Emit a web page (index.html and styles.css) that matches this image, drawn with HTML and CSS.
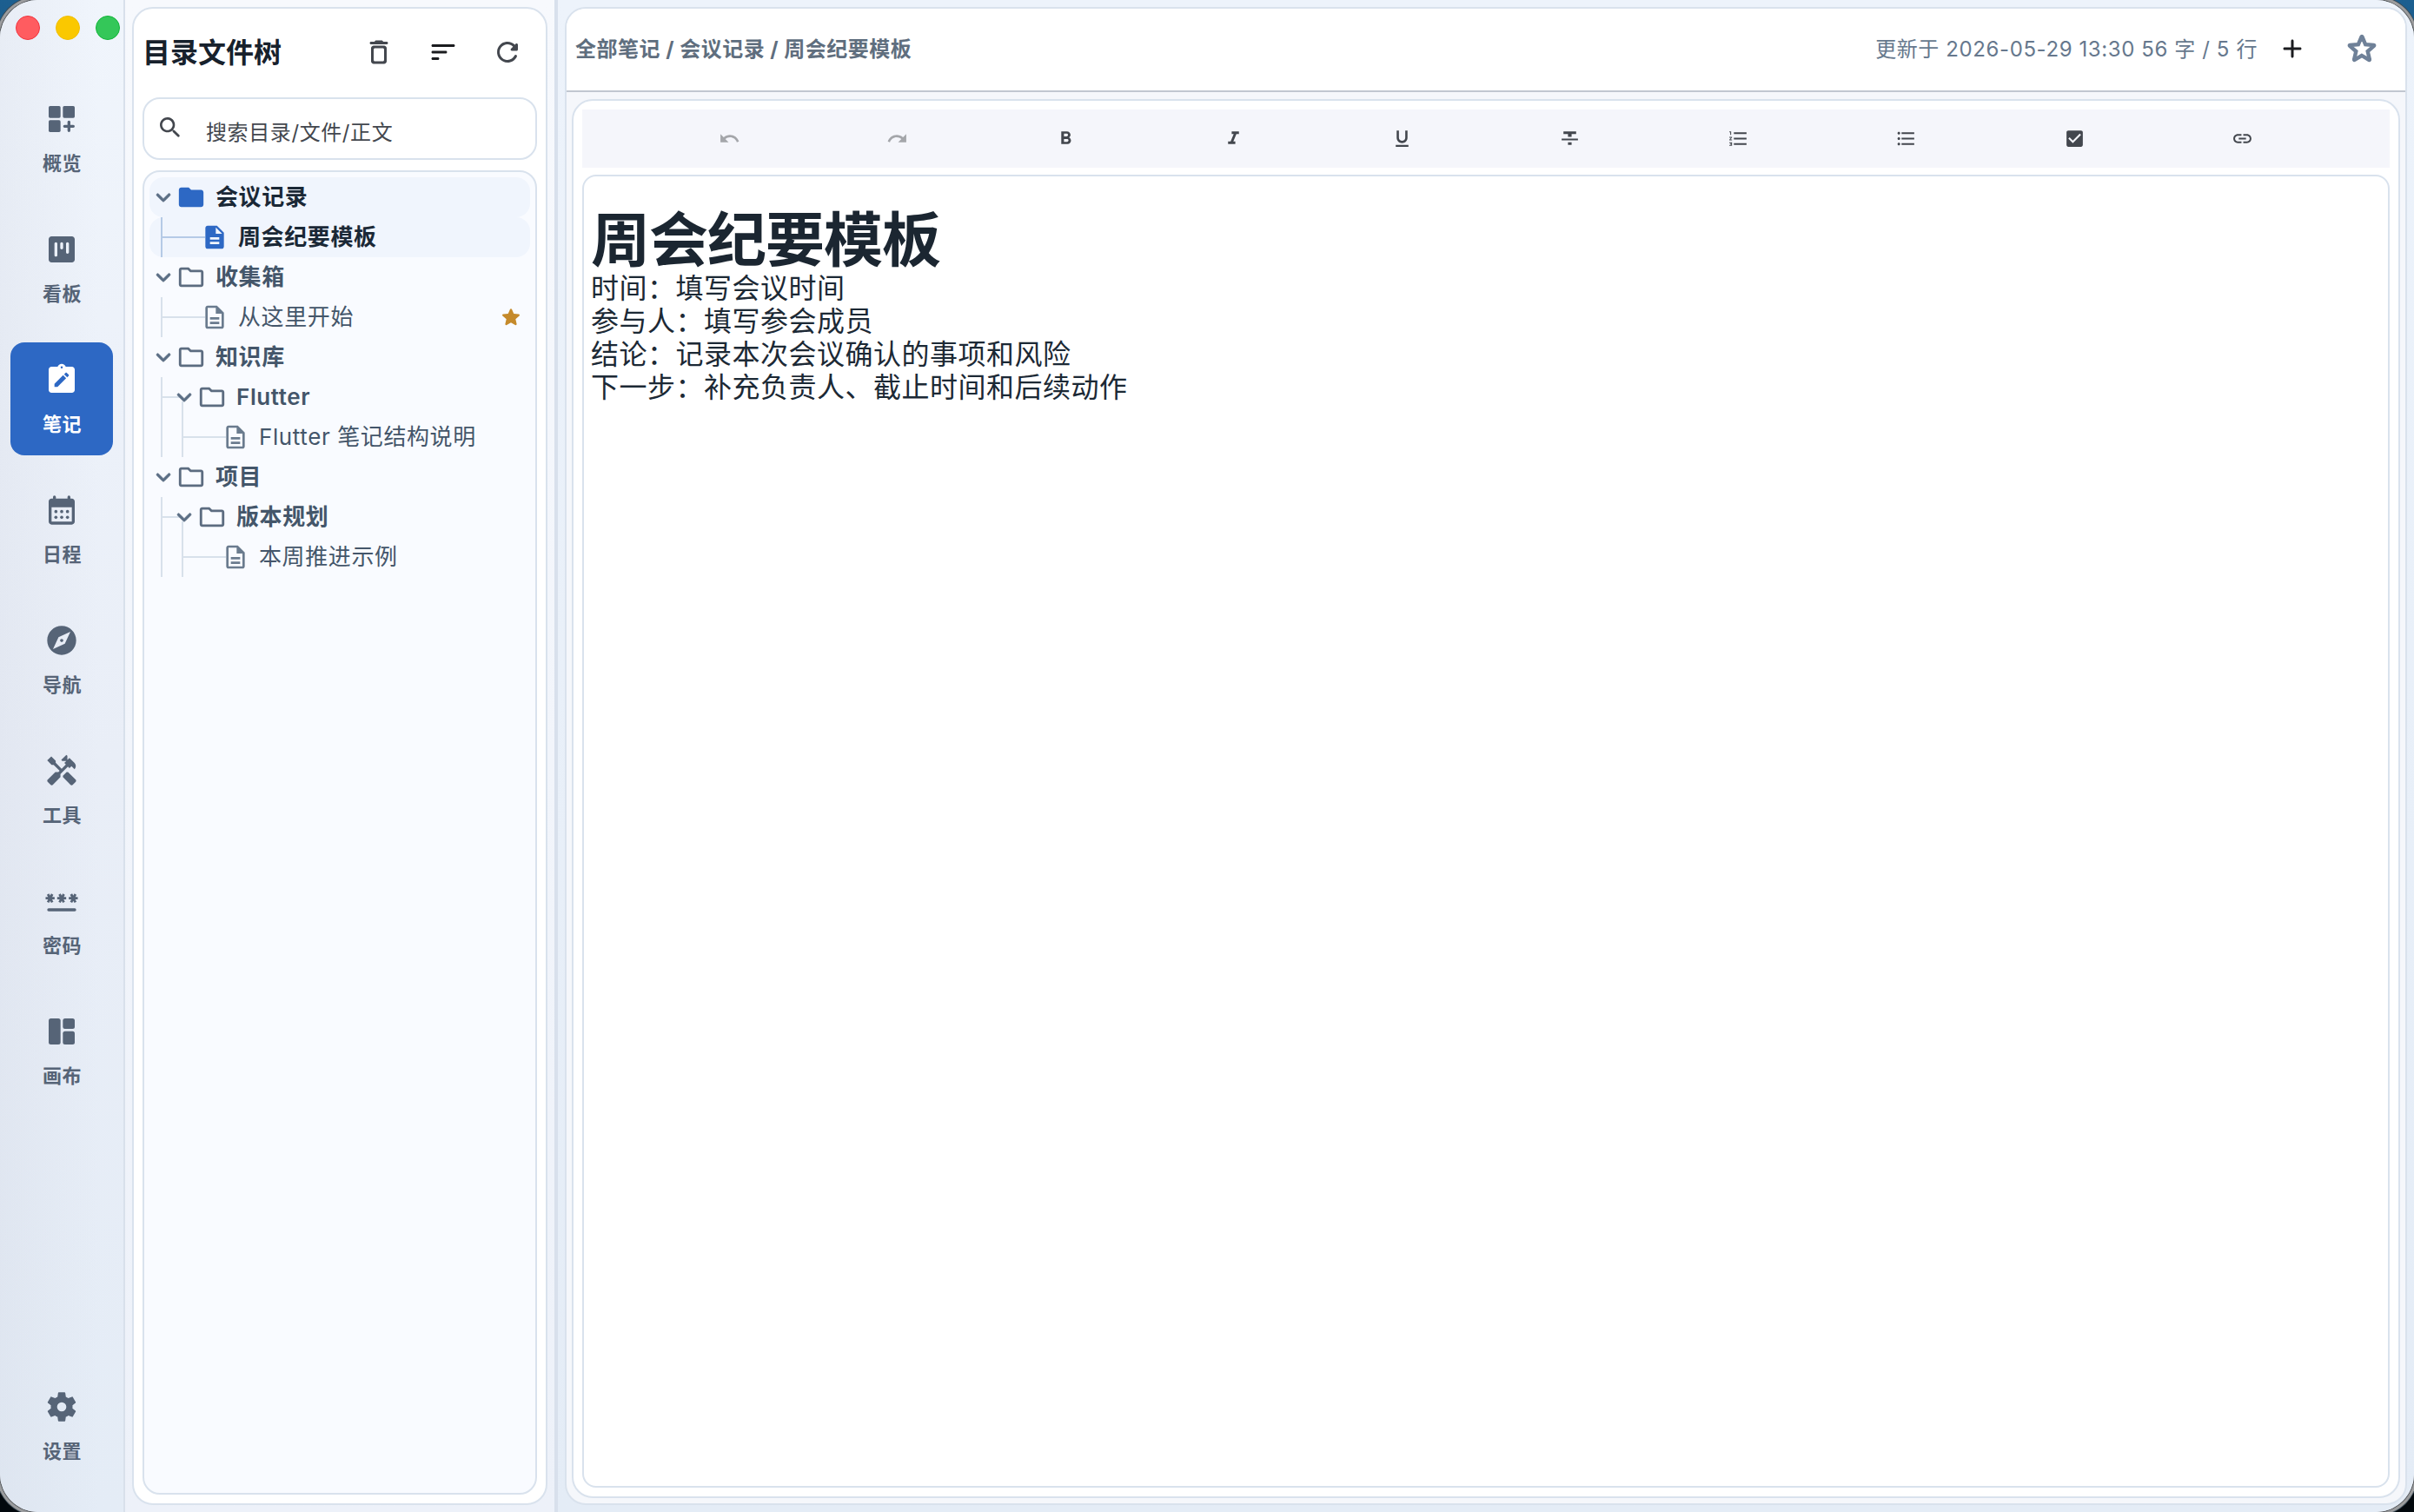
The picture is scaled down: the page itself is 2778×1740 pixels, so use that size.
FILE: index.html
```html
<!DOCTYPE html>
<html lang="zh-CN">

<head>
    <meta charset="UTF-8" />
    <meta name="viewport" content="width=device-width, initial-scale=1.0" />
    <title>周会纪要模板</title>
    <link rel="stylesheet" href="styles.css">
</head>

<body>
    <!-- Shared icons -->
    <svg class="sprite">
        <symbol id="i-chevron" viewBox="0 0 24 24"><path d="M8.12 9.29 12 13.17l3.88-3.88a1 1 0 1 1 1.41 1.41l-4.59 4.59a1 1 0 0 1-1.41 0L6.7 10.7a1 1 0 0 1 0-1.41 1 1 0 0 1 1.42 0z" /></symbol>
        <symbol id="i-folder" viewBox="0 0 24 24"><path d="m9.17 6 2 2H20v10H4V6h5.17M10 4H4c-1.1 0-1.99.9-1.99 2L2 18c0 1.1.9 2 2 2h16c1.1 0 2-.9 2-2V8c0-1.1-.9-2-2-2h-8l-2-2z" /></symbol>
        <symbol id="i-folder-fill" viewBox="0 0 24 24"><path d="M10 4H4c-1.1 0-1.99.9-1.99 2L2 18c0 1.1.9 2 2 2h16c1.1 0 2-.9 2-2V8c0-1.1-.9-2-2-2h-8l-2-2z" /></symbol>
        <symbol id="i-doc" viewBox="0 0 24 24"><path d="M8 16h8v2H8zm0-4h8v2H8zm6-10H6c-1.1 0-2 .9-2 2v16c0 1.1.89 2 1.99 2H18c1.1 0 2-.9 2-2V8l-6-6zm4 18H6V4h7v5h5v11z" /></symbol>
        <symbol id="i-doc-fill" viewBox="0 0 24 24"><path d="M14 2H6c-1.1 0-1.99.9-1.99 2L4 20c0 1.1.89 2 1.99 2H18c1.1 0 2-.9 2-2V8l-6-6zm2 16H8v-2h8v2zm0-4H8v-2h8v2zm-3-5V3.5L18.5 9H13z" /></symbol>
    </svg>

    <div class="window">
        <nav class="sidebar">
            <div class="lights"><i class="red"></i><i class="yellow"></i><i class="green"></i></div>
            <div class="nav">
                <a class="nav-item">
                    <svg viewBox="0 0 24 24"><rect x="3" y="3" width="8.2" height="8.2" rx="1" /><rect x="12.8" y="3" width="8.2" height="8.2" rx="1" /><rect x="3" y="12.8" width="8.2" height="8.2" rx="1" /><path d="M17 13a1 1 0 0 1 1 1v2h2a1 1 0 0 1 0 2h-2v2a1 1 0 0 1-2 0v-2h-2a1 1 0 0 1 0-2h2v-2a1 1 0 0 1 1-1z" /></svg>
                    <span>概览</span>
                </a>
                <a class="nav-item">
                    <svg viewBox="0 0 24 24"><path d="M19 3H5c-1.100 0-2 .9-2 2v14c0 1.100.9 2 2 2h14c1.100 0 2-.9 2-2V5c0-1.100-.9-2-2-2zM8 17c-.55 0-1-.45-1-1V8c0-.55.45-1 1-1s1 .45 1 1v8c0 .55-.45 1-1 1zm4-5c-.55 0-1-.45-1-1V8c0-.55.45-1 1-1s1 .45 1 1v3c0 .55-.45 1-1 1zm4 3c-.55 0-1-.45-1-1V8c0-.55.45-1 1-1s1 .45 1 1v6c0 .55-.45 1-1 1z" /></svg>
                    <span>看板</span>
                </a>
                <a class="nav-item active">
                    <svg viewBox="0 0 24 24"><path fill-rule="evenodd" d="M19 3h-4.180C14.400 1.840 13.300 1 12 1s-2.400.84-2.820 2H5c-1.100 0-2 .9-2 2v14c0 1.100.9 2 2 2h14c1.100 0 2-.9 2-2V5c0-1.100-.9-2-2-2zm-7-.25a.75.75 0 1 1 0 1.500.75.75 0 0 1 0-1.500zM9.100 17H7v-2.140l5.960-5.960 2.120 2.120L9.100 17zm7.750-7.730-1.060 1.060-2.120-2.120 1.060-1.060c.2-.2.51-.2.71 0l1.410 1.410c.2.2.2.51 0 .71z" /></svg>
                    <span>笔记</span>
                </a>
                <a class="nav-item">
                    <svg viewBox="0 0 24 24"><path fill-rule="evenodd" d="M19 4h-1V3a1 1 0 0 0-2 0v1H8V3a1 1 0 0 0-2 0v1H5c-1.110 0-2 .9-2 2v14c0 1.100.89 2 2 2h14c1.100 0 2-.9 2-2V6c0-1.100-.9-2-2-2zm0 16H5V10h14v10z" /><circle cx="8" cy="13" r="1.100" /><circle cx="12" cy="13" r="1.100" /><circle cx="16" cy="13" r="1.100" /><circle cx="8" cy="17" r="1.100" /><circle cx="12" cy="17" r="1.100" /><circle cx="16" cy="17" r="1.100" /></svg>
                    <span>日程</span>
                </a>
                <a class="nav-item">
                    <svg viewBox="0 0 24 24"><path d="M12 10.900c-.61 0-1.100.49-1.100 1.100s.49 1.100 1.100 1.100c.61 0 1.100-.49 1.100-1.100s-.49-1.100-1.100-1.100zM12 2C6.480 2 2 6.480 2 12s4.480 10 10 10 10-4.480 10-10S17.520 2 12 2zm2.190 12.190L6 18l3.810-8.190L18 6l-3.810 8.190z" /></svg>
                    <span>导航</span>
                </a>
                <a class="nav-item">
                    <svg viewBox="0 0 24 24"><path d="m21.670 18.170-5.300-5.300h-.99l-2.540 2.540v.99l5.300 5.300c.39.39 1.020.39 1.410 0l2.120-2.120c.39-.38.39-1.020 0-1.410z" /><path d="m17.340 10.190 1.410-1.410 2.120 2.120c1.170-1.170 1.170-3.070 0-4.240l-3.540-3.540-1.410 1.410V1.710L15.220 1l-3.540 3.540.71.71h2.830l-1.410 1.410 1.060 1.060-2.890 2.890-4.130-4.130V5.060L4.830 2.040 2 4.870 5.030 7.900h1.410l4.130 4.130-.85.85H7.600l-5.300 5.300c-.39.39-.39 1.020 0 1.410l2.120 2.120c.39.39 1.020.39 1.410 0l5.300-5.300v-2.120l5.150-5.150 1.060 1.050z" /></svg>
                    <span>工具</span>
                </a>
                <a class="nav-item">
                    <svg viewBox="0 0 24 24"><path d="M3 17h18a1 1 0 0 1 0 2H3a1 1 0 0 1 0-2z" /><g fill="none" stroke="currentColor" stroke-width="1.700"><path id="ast" d="M.9 10h6.200M2.500 7.200l3 5.600M5.500 7.200l-3 5.600" /><use href="#ast" x="8" /><use href="#ast" x="16" /></g></svg>
                    <span>密码</span>
                </a>
                <a class="nav-item">
                    <svg viewBox="0 0 24 24"><rect x="3" y="3" width="8.200" height="18" rx="1.500" /><rect x="12.800" y="3" width="8.200" height="7.200" rx="1.500" /><rect x="12.800" y="11.800" width="8.200" height="9.200" rx="1.500" /></svg>
                    <span>画布</span>
                </a>
                <a class="nav-item settings">
                    <svg viewBox="0 0 24 24"><path d="M19.430 12.980c.04-.32.07-.64.07-.98s-.03-.66-.07-.98l2.110-1.650c.19-.15.24-.42.12-.64l-2-3.460c-.12-.22-.39-.3-.61-.22l-2.490 1c-.52-.4-1.080-.73-1.690-.98l-.38-2.650C14.460 2.180 14.250 2 14 2h-4c-.25 0-.46.18-.49.42l-.38 2.650c-.61.25-1.170.59-1.690.98l-2.490-1c-.23-.09-.49 0-.61.22l-2 3.460c-.13.22-.07.49.12.64l2.110 1.650c-.04.32-.07.65-.07.98s.03.66.07.98l-2.110 1.650c-.19.15-.24.42-.12.64l2 3.460c.12.22.39.3.61.22l2.490-1c.52.4 1.080.73 1.690.98l.38 2.650c.03.24.24.42.49.42h4c.25 0 .46-.18.49-.42l.38-2.650c.61-.25 1.170-.59 1.690-.98l2.490 1c.23.09.49 0 .61-.22l2-3.460c.12-.22.07-.49-.12-.64l-2.110-1.650zM12 15.200a3.200 3.200 0 1 1 0-6.400 3.200 3.200 0 0 1 0 6.400z" /></svg>
                    <span>设置</span>
                </a>
            </div>
        </nav>

        <aside class="tree-pane">
            <div class="tree-card">
                <header class="tree-head">
                    <h2>目录文件树</h2>
                    <svg viewBox="0 0 24 24"><path d="M6 19c0 1.100.9 2 2 2h8c1.100 0 2-.9 2-2V9c0-1.100-.9-2-2-2H8c-1.100 0-2 .9-2 2v10zM9 9h6c.55 0 1 .45 1 1v8c0 .55-.45 1-1 1H9c-.55 0-1-.45-1-1v-8c0-.55.45-1 1-1zm6.500-5-.71-.71c-.18-.18-.44-.29-.7-.29H9.910c-.26 0-.52.11-.7.29L8.500 4H6c-.55 0-1 .45-1 1s.45 1 1 1h12c.55 0 1-.45 1-1s-.45-1-1-1h-2.500z" /></svg>
                    <svg class="dark" viewBox="0 0 24 24"><path d="M4 18h4c.55 0 1-.45 1-1s-.45-1-1-1H4c-.55 0-1 .45-1 1s.45 1 1 1zM3 7c0 .55.45 1 1 1h16c.55 0 1-.45 1-1s-.45-1-1-1H4c-.55 0-1 .45-1 1zm1 6h10c.55 0 1-.45 1-1s-.45-1-1-1H4c-.55 0-1 .45-1 1s.45 1 1 1z" /></svg>
                    <svg viewBox="0 0 24 24"><path d="M17.650 6.350c-1.630-1.630-3.940-2.570-6.480-2.310-3.670.37-6.690 3.350-7.100 7.020C3.520 15.910 7.270 20 12 20c3.190 0 5.930-1.870 7.210-4.560.32-.67-.16-1.440-.9-1.440-.37 0-.72.2-.88.53-1.130 2.430-3.840 3.970-6.800 3.310-2.220-.49-4.010-2.300-4.480-4.520C5.310 9.440 8.260 6 12 6c1.660 0 3.140.69 4.220 1.780l-1.510 1.510c-.63.63-.19 1.710.7 1.710H19c.55 0 1-.45 1-1V6.410c0-.89-1.080-1.340-1.710-.71l-.64.65z" /></svg>
                </header>
                <div class="search">
                    <svg viewBox="0 0 24 24"><path d="M15.500 14h-.79l-.28-.27c1.200-1.400 1.820-3.310 1.480-5.340-.47-2.780-2.790-5-5.590-5.340-4.230-.52-7.780 3.040-7.270 7.270.34 2.800 2.560 5.120 5.340 5.590 2.030.34 3.940-.28 5.340-1.480l.27.28v.79l4.250 4.250c.41.41 1.080.41 1.490 0 .41-.41.41-1.080 0-1.490L15.500 14zm-6 0C7.010 14 5 11.990 5 9.500S7.010 5 9.500 5 14 7.010 14 9.500 11.990 14 9.500 14z" /></svg>
                    <span>搜索目录/文件/正文</span>
                </div>
                <div class="tree">
                    <div class="row folder on"><svg class="chev"><use href="#i-chevron" /></svg><svg class="fold"><use href="#i-folder-fill" /></svg><span>会议记录</span></div>
                    <div class="row file on"><i class="branch"></i><svg class="doc"><use href="#i-doc-fill" /></svg><span>周会纪要模板</span></div>
                    <div class="row folder"><svg class="chev"><use href="#i-chevron" /></svg><svg class="fold"><use href="#i-folder" /></svg><span>收集箱</span></div>
                    <div class="row file"><i class="branch"></i><svg class="doc"><use href="#i-doc" /></svg><span>从这里开始</span>
                        <svg class="star" viewBox="0 0 24 24"><path d="m12 17.270 4.150 2.510c.76.46 1.690-.22 1.490-1.080l-1.100-4.720 3.670-3.180c.67-.58.31-1.680-.57-1.750l-4.830-.41-1.890-4.460c-.34-.81-1.500-.81-1.840 0L9.190 8.630l-4.830.41c-.88.07-1.240 1.170-.57 1.750l3.670 3.180-1.100 4.720c-.2.86.73 1.540 1.490 1.080l4.150-2.500z" /></svg>
                    </div>
                    <div class="row folder"><svg class="chev"><use href="#i-chevron" /></svg><svg class="fold"><use href="#i-folder" /></svg><span>知识库</span></div>
                    <div class="row folder sub"><i class="line"></i><i class="branch short"></i><svg class="chev"><use href="#i-chevron" /></svg><svg class="fold"><use href="#i-folder" /></svg><span>Flutter</span></div>
                    <div class="row file"><i class="line"></i><i class="branch"></i><svg class="doc"><use href="#i-doc" /></svg><span>Flutter 笔记结构说明</span></div>
                    <div class="row folder"><svg class="chev"><use href="#i-chevron" /></svg><svg class="fold"><use href="#i-folder" /></svg><span>项目</span></div>
                    <div class="row folder sub"><i class="line"></i><i class="branch short"></i><svg class="chev"><use href="#i-chevron" /></svg><svg class="fold"><use href="#i-folder" /></svg><span>版本规划</span></div>
                    <div class="row file"><i class="line"></i><i class="branch"></i><svg class="doc"><use href="#i-doc" /></svg><span>本周推进示例</span></div>
                </div>
            </div>
        </aside>

        <main class="main-pane">
            <div class="note-card">
                <header class="note-head">
                    <span class="crumbs">全部笔记 / 会议记录 / 周会纪要模板</span>
                    <span class="meta">更新于 2026-05-29 13:30 56 字 / 5 行</span>
                    <svg class="plus" viewBox="0 0 24 24"><path d="M18 13h-5v5c0 .55-.45 1-1 1s-1-.45-1-1v-5H6c-.55 0-1-.45-1-1s.45-1 1-1h5V6c0-.55.45-1 1-1s1 .45 1 1v5h5c.55 0 1 .45 1 1s-.45 1-1 1z" /></svg>
                    <svg class="fav" viewBox="0 0 24 24"><path d="m19.650 9.040-4.840-.42-1.890-4.450c-.34-.81-1.500-.81-1.840 0L9.190 8.630l-4.830.41c-.88.07-1.240 1.170-.57 1.750l3.670 3.180-1.100 4.720c-.2.86.73 1.540 1.490 1.080l4.150-2.500 4.150 2.510c.76.46 1.690-.22 1.490-1.080l-1.100-4.730 3.670-3.180c.67-.58.32-1.680-.56-1.750zM12 15.400l-3.760 2.270 1-4.280-3.320-2.880 4.380-.38L12 6.100l1.710 4.040 4.380.38-3.320 2.880 1 4.280L12 15.400z" /></svg>
                </header>
                <div class="editor">
                    <div class="toolbar">
                        <svg class="off" viewBox="0 0 24 24"><path d="M12.500 8c-2.650 0-5.050.99-6.900 2.600L2 7v9h9l-3.620-3.620c1.390-1.160 3.160-1.880 5.120-1.880 3.540 0 6.550 2.310 7.600 5.500l2.370-.78C21.080 11.030 17.150 8 12.500 8z" /></svg>
                        <svg class="off" viewBox="0 0 24 24"><path d="M18.400 10.600C16.550 8.990 14.150 8 11.500 8c-4.650 0-8.580 3.030-9.960 7.220L3.900 16c1.050-3.190 4.050-5.500 7.600-5.500 1.950 0 3.730.72 5.120 1.880L13 16h9V7l-3.600 3.600z" /></svg>
                        <svg viewBox="0 0 24 24"><path d="M15.600 10.790c.97-.67 1.650-1.770 1.650-2.790 0-2.260-1.750-4-4-4H7v14h7.040c2.090 0 3.710-1.700 3.710-3.790 0-1.520-.86-2.820-2.150-3.420zM10 6.500h3c.83 0 1.500.67 1.500 1.500s-.67 1.500-1.500 1.500h-3v-3zm3.500 9H10v-3h3.500c.83 0 1.500.67 1.500 1.500s-.67 1.500-1.500 1.500z" /></svg>
                        <svg viewBox="0 0 24 24"><path d="M10 4v3h2.210l-3.420 8H6v3h8v-3h-2.210l3.420-8H18V4z" /></svg>
                        <svg viewBox="0 0 24 24"><path d="M12 17c3.310 0 6-2.690 6-6V3h-2.500v8c0 1.930-1.570 3.500-3.500 3.500S8.500 12.930 8.500 11V3H6v8c0 3.310 2.690 6 6 6zm-7 2v2h14v-2H5z" /></svg>
                        <svg viewBox="0 0 24 24"><path d="M10 19h4v-3h-4v3zM5 4v3h5v3h4V7h5V4H5zM3 14h18v-2H3v2z" /></svg>
                        <svg viewBox="0 0 24 24"><path d="M2 17h2v.5H3v1h1v.5H2v1h3v-4H2v1zm1-9h1V4H2v1h1v3zm-1 3h1.800L2 13.100v.9h3v-1H3.200L5 10.900V10H2v1zm5-6v2h14V5H7zm0 14h14v-2H7v2zm0-6h14v-2H7v2z" /></svg>
                        <svg viewBox="0 0 24 24"><path d="M4 10.500c-.83 0-1.500.67-1.500 1.500s.67 1.500 1.500 1.500 1.500-.67 1.500-1.500-.67-1.500-1.500-1.500zm0-6c-.83 0-1.500.67-1.500 1.500S3.170 7.500 4 7.500 5.500 6.830 5.500 6 4.830 4.500 4 4.500zm0 12c-.83 0-1.500.68-1.500 1.500s.68 1.500 1.500 1.500 1.500-.68 1.500-1.500-.67-1.500-1.500-1.500zM7 19h14v-2H7v2zm0-6h14v-2H7v2zm0-8v2h14V5H7z" /></svg>
                        <svg viewBox="0 0 24 24"><path d="M19 3H5c-1.110 0-2 .9-2 2v14c0 1.100.89 2 2 2h14c1.110 0 2-.9 2-2V5c0-1.100-.89-2-2-2zm-9 14-5-5 1.410-1.410L10 14.170l7.590-7.590L19 8l-9 9z" /></svg>
                        <svg viewBox="0 0 24 24"><path d="M3.900 12c0-1.710 1.390-3.100 3.100-3.100h4V7H7c-2.760 0-5 2.240-5 5s2.240 5 5 5h4v-1.900H7c-1.710 0-3.100-1.390-3.100-3.100zM8 13h8v-2H8v2zm9-6h-4v1.900h4c1.710 0 3.100 1.390 3.100 3.100s-1.390 3.100-3.100 3.100h-4V17h4c2.760 0 5-2.240 5-5s-2.240-5-5-5z" /></svg>
                    </div>
                    <article class="content">
                        <h1>周会纪要模板</h1>
                        <p>时间：填写会议时间</p>
                        <p>参与人：填写参会成员</p>
                        <p>结论：记录本次会议确认的事项和风险</p>
                        <p>下一步：补充负责人、截止时间和后续动作</p>
                    </article>
                </div>
            </div>
        </main>
    </div>
</body>

</html>
```
FILE: styles.css
```css
* {
    box-sizing: border-box;
}

body {
    margin: 0;
    background: linear-gradient(#1c5f90, #02080d 60%);
    font-family: Inter, "Noto Sans CJK SC", sans-serif;
}

h1,
h2,
p {
    margin: 0;
}

svg {
    display: block;
    flex: none;
    fill: currentColor;
}

.sprite {
    display: none;
}

.window {
    display: flex;
    width: 2778px;
    height: 1740px;
    border-radius: 44px;
    overflow: hidden;
    background: #eef3fb;
    box-shadow: 0 0 0 1px #55595d, 0 0 0 4px #9b9c9e, 0 0 0 5px #3a4a55;
}

/* Left navigation */
.sidebar {
    width: 144px;
    display: flex;
    flex-direction: column;
    border-right: 2px solid #d8e0eb;
    background: linear-gradient(90deg, rgba(190, 195, 210, 0.16), rgba(190, 195, 210, 0) 80%), linear-gradient(#f0f5fc, #e9eef7 50%, #e4ecf6);
}

.lights {
    display: flex;
    gap: 18px;
    padding: 18px 0 0 18px;
    height: 94px;
}

.lights i {
    flex: none;
    width: 28px;
    height: 28px;
    border-radius: 50%;
    border: 1px solid #f0353f;
    background: #ff5c60;
}

.lights .yellow {
    border-color: #f0bd00;
    background: #fac800;
}

.lights .green {
    border-color: #12b53a;
    background: #34c759;
}

.nav {
    flex: 1;
    display: flex;
    flex-direction: column;
    gap: 20px;
    padding: 0 12px 34px;
}

.nav-item {
    height: 130px;
    display: flex;
    flex-direction: column;
    align-items: center;
    padding-top: 23px;
    border-radius: 16px;
    color: #566477;
    font-size: 22px;
    font-weight: 700;
    letter-spacing: 0.5px;
    line-height: 32px;
}

.nav-item svg {
    width: 40px;
    height: 40px;
    margin-bottom: 15px;
}

.nav-item span {
    padding-left: 1px;
}

.nav-item.active {
    background: #2d68c4;
    color: #ffffff;
}

.nav-item.settings {
    margin-top: auto;
}

/* File tree */
.tree-pane {
    width: 498px;
    padding: 8px;
    border-right: 4px solid #d8e0ec;
    background: linear-gradient(#f7f9fd, #edf1f9);
}

.tree-card {
    height: 1724px;
    width: 478px;
    display: flex;
    flex-direction: column;
    padding: 10px;
    border: 2px solid #d9e2ed;
    border-radius: 24px;
    background: #ffffff;
}

.tree-head {
    display: flex;
    align-items: center;
    height: 80px;
    color: #43474e;
}

.tree-head h2 {
    flex: 1;
    padding-top: 2px;
    font-size: 32px;
    line-height: 40px;
    color: #17212c;
}

.tree-head svg {
    width: 36px;
    height: 36px;
    margin-right: 38px;
}

.tree-head svg:last-child {
    margin-right: 16px;
}

.tree-head .dark {
    color: #1b1c1f;
}

.search {
    display: flex;
    align-items: center;
    height: 72px;
    margin: 12px 0;
    padding-left: 14px;
    border: 2px solid #d9e2ed;
    border-radius: 20px;
    color: #43474e;
    font-size: 24px;
    line-height: 34px;
    letter-spacing: 0.6px;
}

.search svg {
    width: 32px;
    height: 32px;
    margin: 0 25px 2px 0;
}

.search span {
    padding-top: 9px;
}

.tree {
    flex: 1;
    padding: 6px;
    border: 2px solid #d9e2ed;
    border-radius: 20px;
    background: #f9fbff;
}

.row {
    display: flex;
    align-items: center;
    height: 46px;
    padding: 0 9px 0 3px;
    border-radius: 16px;
    color: #44566a;
    font-size: 26px;
    line-height: 46px;
    letter-spacing: 0.6px;
}

.row.on {
    background: #f0f5fd;
    color: #1a2836;
    font-weight: 700;
}

.row span {
    white-space: nowrap;
}

.row.folder {
    font-weight: 600;
}

.row.file {
    padding-left: 13px;
}

.chev {
    width: 34px;
    height: 34px;
    margin: 0 -2px 0 -4px;
    color: #5c6f85;
    stroke: currentColor;
    stroke-width: 0.5;
}

.fold {
    width: 34px;
    height: 34px;
    margin-right: 11px;
    color: #5c6c80;
}

.doc {
    width: 32px;
    height: 32px;
    margin: 0 11px 0 -5px;
    color: #6a7b8e;
}

.on .fold,
.on .doc {
    color: #2d68c4;
}

/* Guide lines drawn before nested rows */
.line {
    width: 24px;
    height: 46px;
    border-left: 2px solid #d8e1eb;
}

.branch {
    width: 51px;
    height: 46px;
    border-left: 2px solid #d8e1eb;
    background: linear-gradient(#d8e1eb, #d8e1eb) no-repeat 0 22px / 100% 2px;
}

.on .branch {
    border-color: #b5cae6;
    background-image: linear-gradient(#b5cae6, #b5cae6);
}

.row.sub {
    padding-left: 13px;
    background: linear-gradient(#d8e1eb, #d8e1eb) no-repeat 37px 28px / 2px 18px;
}

.branch.short {
    width: 22px;
    border-left: 0;
    margin-left: -24px;
    margin-right: -8px;
}

.star {
    width: 28px;
    height: 28px;
    margin-left: auto;
    margin-right: -1px;
    color: #c58a2b;
}

/* Note editor */
.main-pane {
    flex: 1;
    padding: 8px;
    background: linear-gradient(#edf3fb, #e4ecf6);
}

.note-card {
    height: 1724px;
    display: flex;
    flex-direction: column;
    border: 2px solid #d9e2ed;
    border-radius: 24px;
    background: #f5f7fb;
    overflow: hidden;
}

.note-head {
    display: flex;
    align-items: center;
    height: 96px;
    padding: 0 28px 2px 10px;
    border-bottom: 2px solid #c1c7d0;
    background: #ffffff;
    font-size: 24px;
    line-height: 34px;
}

.crumbs {
    flex: 1;
    padding-top: 2px;
    font-weight: 700;
    letter-spacing: 0.5px;
    color: #5f6e7e;
}

.meta {
    padding-top: 2px;
    letter-spacing: 0.6px;
    color: #66788d;
}

.plus {
    width: 36px;
    height: 36px;
    margin: 0 40px 0 22px;
    color: #1b1c1f;
}

.fav {
    width: 44px;
    height: 44px;
    color: #6f8198;
    stroke: currentColor;
    stroke-width: 0.8;
}

.editor {
    flex: 1;
    display: flex;
    flex-direction: column;
    gap: 8px;
    margin: 8px 6px 6px;
    padding: 10px;
    border: 2px solid #d9e2ed;
    border-radius: 24px;
    background: #ffffff;
}

.toolbar {
    display: flex;
    justify-content: space-between;
    align-items: center;
    height: 67px;
    padding: 0 157px;
    background: #f5f6fb;
    color: #43474e;
}

.toolbar svg {
    width: 25px;
    height: 25px;
}

.toolbar .off {
    color: #a4a6aa;
}

.content {
    flex: 1;
    padding: 36px 8px;
    border: 2px solid #d9e2ed;
    border-radius: 16px;
    color: #1c2935;
}

.content h1 {
    font-size: 68px;
    line-height: 74px;
    letter-spacing: -1px;
    color: #1b2631;
}

.content p {
    font-size: 32px;
    line-height: 38px;
    letter-spacing: 0.5px;
}
```
